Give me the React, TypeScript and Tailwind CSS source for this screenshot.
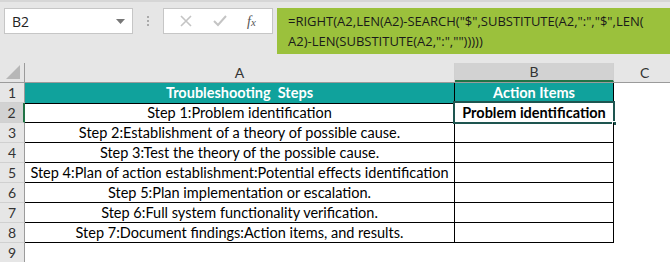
import React from "react";

const steps = [
  "Step 1:Problem identification",
  "Step 2:Establishment of a theory of possible cause.",
  "Step 3:Test the theory of the possible cause.",
  "Step 4:Plan of action establishment:Potential effects identification",
  "Step 5:Plan implementation or escalation.",
  "Step 6:Full system functionality verification.",
  "Step 7:Document findings:Action items, and results.",
];

function RowHead({ n, active }: { n: number; active?: boolean }) {
  return (
    <div
      className={`w-[25px] h-[20px] shrink-0 flex items-center justify-center border-b border-[#d0d0d0] text-[14px] text-[#333] ${
        active ? "bg-[#d2d2d2] border-r-2 border-r-[#217346]" : "bg-[#e6e6e6] border-r border-r-[#9b9b9b]"
      }`}
    >
      {n}
    </div>
  );
}

export default function App() {
  return (
    <div
      className="w-[670px] h-[262px] bg-[#e6e6e6] overflow-hidden border-t-2 border-[#d6d6d6]"
      style={{ fontFamily: "Lato, 'Open Sans', sans-serif" }}
    >
      {/* formula bar */}
      <div className="flex items-start pt-[6px] h-[61px]">
        <div className="ml-[4px] w-[129px] h-[26px] bg-white border border-[#c6c6c6] flex items-center justify-between pl-[7px] pr-[7px] text-[14px] text-[#222]" style={{ fontFamily: "'Open Sans', sans-serif" }}>
          <span>B2</span>
          <svg width="9" height="5" viewBox="0 0 9 5"><path d="M0 0h9L4.5 5z" fill="#777" /></svg>
        </div>
        <div className="w-[30px] h-[26px] flex flex-col items-center justify-center gap-[2px]">
          <span className="w-[2px] h-[2px] bg-[#aaa]" />
          <span className="w-[2px] h-[2px] bg-[#aaa]" />
          <span className="w-[2px] h-[2px] bg-[#aaa]" />
        </div>
        <div className="w-[110px] h-[26px] bg-white border border-[#c6c6c6] flex items-center justify-around px-[6px]">
          <svg width="12" height="12" viewBox="0 0 12 12"><path d="M1 1l10 10M11 1L1 11" stroke="#c4c4c4" strokeWidth="1.6" /></svg>
          <svg width="14" height="12" viewBox="0 0 14 12"><path d="M1 6l4 4 8-9" stroke="#c4c4c4" strokeWidth="2" fill="none" /></svg>
          <span className="text-[14px] italic text-[#555]" style={{ fontFamily: "'Liberation Serif', serif" }}>
            f<span className="text-[11px]">x</span>
          </span>
        </div>
        <div
          className="ml-[4px] flex-1 h-[46px] bg-[#9bc13c] pl-[11px] pt-[3px] text-[13px] leading-[20px] text-[#1a1a1a] whitespace-pre"
          style={{ fontFamily: "'Open Sans', sans-serif" }}
        >
          {'=RIGHT(A2,LEN(A2)-SEARCH("$",SUBSTITUTE(A2,":","$",LEN(\nA2)-LEN(SUBSTITUTE(A2,":","")))))'}
        </div>
      </div>

      {/* sheet */}
      <div className="flex flex-col">
        {/* column headers */}
        <div className="flex h-[20px] border-b border-[#9b9b9b] text-[14px] text-[#333]">
          <div className="w-[25px] shrink-0 border-r border-[#9b9b9b] flex items-end justify-end">
            <svg width="16" height="16" viewBox="0 0 16 16" className="mr-[3px] mb-[2px]"><path d="M15 1v14H1z" fill="#b7b7b7" /></svg>
          </div>
          <div className="w-[430px] shrink-0 border-r border-[#d0d0d0] flex items-center justify-center">A</div>
          <div className="w-[159px] shrink-0 bg-[#d2d2d2] border-r border-[#d0d0d0] border-b-2 border-b-[#217346] flex items-center justify-center">B</div>
          <div className="flex-1 flex items-center justify-start pl-[26px]">C</div>
        </div>

        {/* row 1 */}
        <div className="flex">
          <RowHead n={1} />
          <div className="w-[589px] h-[20px] shrink-0 flex bg-[#10a29c] text-white font-bold text-[14.5px]">
            <div className="w-[430px] border-r border-black flex items-center justify-center">Troubleshooting&nbsp; Steps</div>
            <div className="flex-1 border-r border-black flex items-center justify-center">Action Items</div>
          </div>
          <div className="flex-1 bg-white" />
        </div>

        {steps.map((s, i) => (
          <div key={i} className="flex">
            <RowHead n={i + 2} active={i === 0} />
            <div className="w-[589px] h-[20px] shrink-0 flex bg-white text-[14.5px] text-black border-b border-black">
              <div className={`w-[430px] border-r border-black flex items-center justify-center whitespace-nowrap ${i === 0 ? "border-t border-t-black" : ""}`}>{s}</div>
              <div className="flex-1 border-r border-black relative flex items-center justify-center">
                {i === 0 && (
                  <>
                    <div className="absolute -inset-[2px] border-2 border-[#1e5550] pointer-events-none" />
                    <div className="absolute right-[-4px] bottom-[-4px] w-[5px] h-[5px] bg-[#1e5550] border border-white" />
                    <span className="font-bold">Problem identification</span>
                  </>
                )}
              </div>
            </div>
            <div className="flex-1 bg-white" />
          </div>
        ))}

        <div className="flex">
          <RowHead n={9} />
          <div className="flex-1 bg-white" />
        </div>
      </div>
    </div>
  );
}
